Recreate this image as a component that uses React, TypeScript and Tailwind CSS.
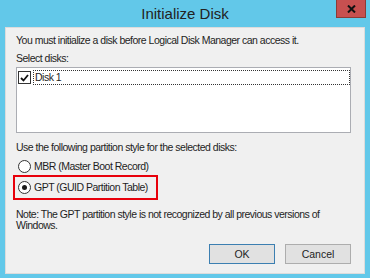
import React from 'react';

function Radio({ checked }: { checked?: boolean }) {
  return (
    <span className="flex h-[13px] w-[13px] shrink-0 items-center justify-center rounded-full border border-[#333333] bg-white">
      {checked && <span className="h-[5px] w-[5px] rounded-full bg-[#1a1a1a]" />}
    </span>
  );
}

export default function App() {
  return (
    <div
      className="flex h-[278px] w-[370px] flex-col bg-[#62c8e9] text-[10.5px] leading-[13px] tracking-[-0.5px] whitespace-nowrap text-[#1e1e1e]"
      style={{ fontFamily: '"Liberation Sans", Arial, sans-serif' }}
    >
      {/* title bar */}
      <div className="relative flex h-[27px] shrink-0 items-center justify-center tracking-normal">
        <span className="text-[15px] leading-[18px] text-[#222222]">Initialize Disk</span>
        <button className="absolute right-[4px] top-0 flex h-[18px] w-[30px] items-center justify-center border border-t-0 border-[#8c3b36] bg-[#c75050]">
          <svg width="9" height="8" viewBox="0 0 9 8">
            <path d="M1 0.5 L8 7.5 M8 0.5 L1 7.5" stroke="#111" strokeWidth="2" />
          </svg>
        </button>
      </div>

      {/* body */}
      <div className="mx-[5px] mb-[4px] flex flex-1 flex-col border border-[#dcdcdc] bg-[#f0f0f0] pl-[10px] pr-[13px] pt-[6px]">
        <p>You must initialize a disk before Logical Disk Manager can access it.</p>
        <p className="mt-[5px]">Select disks:</p>
        <div className="mt-[2px] h-[66px] border border-[#abadb3] bg-white">
          <div className="flex items-center gap-[2px] pl-[1px] pt-[2px]">
            <span className="flex h-[13px] w-[13px] shrink-0 items-center justify-center border border-[#333333] bg-white">
              <svg width="9" height="8" viewBox="0 0 9 8">
                <path d="M1 4 L3.5 6.5 L8 1" stroke="#111" strokeWidth="1.8" fill="none" />
              </svg>
            </span>
            <span className="flex h-[15px] flex-1 items-center border border-dotted border-[#333333] pl-[1px]">Disk 1</span>
          </div>
        </div>

        <p className="mt-[8px]">Use the following partition style for the selected disks:</p>
        <div className="ml-[2px] mt-[6px] flex items-center gap-[3px]">
          <Radio />
          <span>MBR (Master Boot Record)</span>
        </div>
        <div className="-ml-[3px] mt-[2px] flex h-[25px] w-[145px] items-center gap-[3px] border-2 border-[#e8000b] pl-[3px]">
          <Radio checked />
          <span>GPT (GUID Partition Table)</span>
        </div>

        <p className="mt-[9px] leading-[11px]">
          Note: The GPT partition style is not recognized by all previous versions of
          <br />
          Windows.
        </p>

        <div className="mt-auto mb-[9px] flex justify-end gap-[10px] tracking-normal">
          <button className="h-[20px] w-[66px] border border-[#3c7fb1] bg-[#e1e1e1]">OK</button>
          <button className="h-[20px] w-[66px] border border-[#adadad] bg-[#e1e1e1]">Cancel</button>
        </div>
      </div>
    </div>
  );
}
